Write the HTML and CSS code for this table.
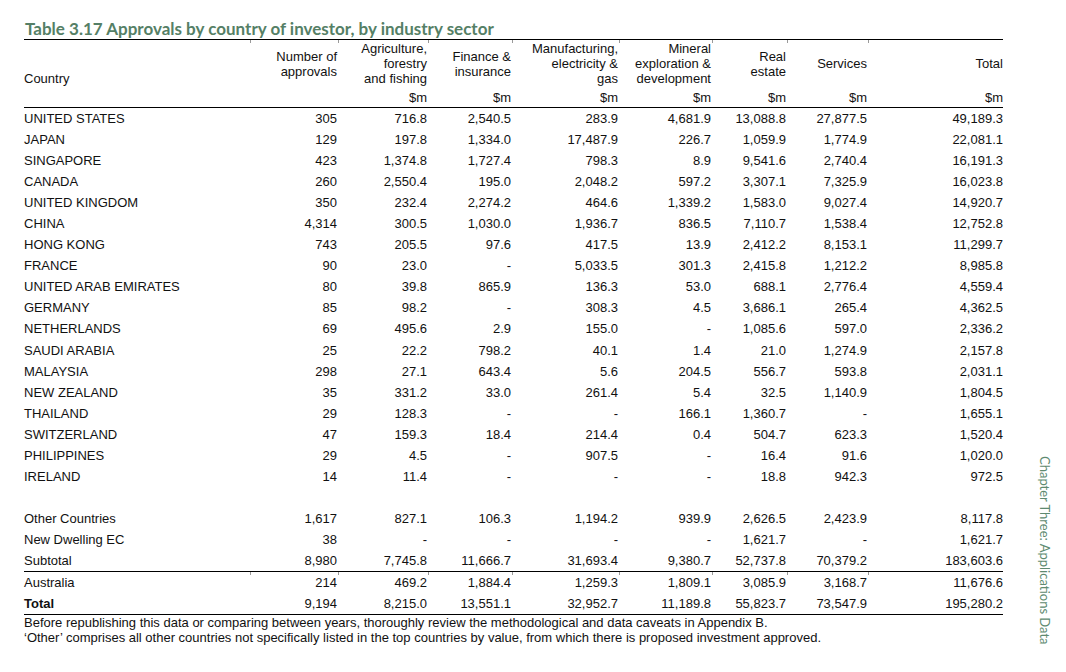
FILE: index.html
```html
<!DOCTYPE html>
<html lang="en">
<head>
<meta charset="utf-8">
<title>Table 3.17 Approvals by country of investor, by industry sector</title>
<link rel="stylesheet" href="styles.css">
</head>
<body>
<div class="page">
  <main class="main">
    <h1 class="title">Table 3.17 Approvals by country of investor, by industry sector</h1>
    <table class="data">
      <colgroup>
        <col class="c-country"><col class="c-num"><col class="c-agri"><col class="c-fin"><col class="c-man"><col class="c-min"><col class="c-real"><col class="c-serv"><col class="c-total">
      </colgroup>
      <thead>
        <tr class="head-names">
          <th class="country-head">Country</th>
          <th>Number of<br>approvals</th>
          <th>Agriculture,<br>forestry<br>and fishing</th>
          <th>Finance &amp;<br>insurance</th>
          <th>Manufacturing,<br>electricity &amp;<br>gas</th>
          <th>Mineral<br>exploration &amp;<br>development</th>
          <th>Real<br>estate</th>
          <th>Services</th>
          <th>Total</th>
        </tr>
        <tr class="head-units">
          <th></th><th></th><th>$m</th><th>$m</th><th>$m</th><th>$m</th><th>$m</th><th>$m</th><th>$m</th>
        </tr>
      </thead>
      <tbody>
        <tr><td>UNITED STATES</td><td>305</td><td>716.8</td><td>2,540.5</td><td>283.9</td><td>4,681.9</td><td>13,088.8</td><td>27,877.5</td><td>49,189.3</td></tr>
        <tr><td>JAPAN</td><td>129</td><td>197.8</td><td>1,334.0</td><td>17,487.9</td><td>226.7</td><td>1,059.9</td><td>1,774.9</td><td>22,081.1</td></tr>
        <tr><td>SINGAPORE</td><td>423</td><td>1,374.8</td><td>1,727.4</td><td>798.3</td><td>8.9</td><td>9,541.6</td><td>2,740.4</td><td>16,191.3</td></tr>
        <tr><td>CANADA</td><td>260</td><td>2,550.4</td><td>195.0</td><td>2,048.2</td><td>597.2</td><td>3,307.1</td><td>7,325.9</td><td>16,023.8</td></tr>
        <tr><td>UNITED KINGDOM</td><td>350</td><td>232.4</td><td>2,274.2</td><td>464.6</td><td>1,339.2</td><td>1,583.0</td><td>9,027.4</td><td>14,920.7</td></tr>
        <tr><td>CHINA</td><td>4,314</td><td>300.5</td><td>1,030.0</td><td>1,936.7</td><td>836.5</td><td>7,110.7</td><td>1,538.4</td><td>12,752.8</td></tr>
        <tr><td>HONG KONG</td><td>743</td><td>205.5</td><td>97.6</td><td>417.5</td><td>13.9</td><td>2,412.2</td><td>8,153.1</td><td>11,299.7</td></tr>
        <tr><td>FRANCE</td><td>90</td><td>23.0</td><td>-</td><td>5,033.5</td><td>301.3</td><td>2,415.8</td><td>1,212.2</td><td>8,985.8</td></tr>
        <tr><td>UNITED ARAB EMIRATES</td><td>80</td><td>39.8</td><td>865.9</td><td>136.3</td><td>53.0</td><td>688.1</td><td>2,776.4</td><td>4,559.4</td></tr>
        <tr><td>GERMANY</td><td>85</td><td>98.2</td><td>-</td><td>308.3</td><td>4.5</td><td>3,686.1</td><td>265.4</td><td>4,362.5</td></tr>
        <tr><td>NETHERLANDS</td><td>69</td><td>495.6</td><td>2.9</td><td>155.0</td><td>-</td><td>1,085.6</td><td>597.0</td><td>2,336.2</td></tr>
        <tr><td>SAUDI ARABIA</td><td>25</td><td>22.2</td><td>798.2</td><td>40.1</td><td>1.4</td><td>21.0</td><td>1,274.9</td><td>2,157.8</td></tr>
        <tr><td>MALAYSIA</td><td>298</td><td>27.1</td><td>643.4</td><td>5.6</td><td>204.5</td><td>556.7</td><td>593.8</td><td>2,031.1</td></tr>
        <tr><td>NEW ZEALAND</td><td>35</td><td>331.2</td><td>33.0</td><td>261.4</td><td>5.4</td><td>32.5</td><td>1,140.9</td><td>1,804.5</td></tr>
        <tr><td>THAILAND</td><td>29</td><td>128.3</td><td>-</td><td>-</td><td>166.1</td><td>1,360.7</td><td>-</td><td>1,655.1</td></tr>
        <tr><td>SWITZERLAND</td><td>47</td><td>159.3</td><td>18.4</td><td>214.4</td><td>0.4</td><td>504.7</td><td>623.3</td><td>1,520.4</td></tr>
        <tr><td>PHILIPPINES</td><td>29</td><td>4.5</td><td>-</td><td>907.5</td><td>-</td><td>16.4</td><td>91.6</td><td>1,020.0</td></tr>
        <tr><td>IRELAND</td><td>14</td><td>11.4</td><td>-</td><td>-</td><td>-</td><td>18.8</td><td>942.3</td><td>972.5</td></tr>
        <tr class="blank"><td></td><td></td><td></td><td></td><td></td><td></td><td></td><td></td><td></td></tr>
        <tr><td>Other Countries</td><td>1,617</td><td>827.1</td><td>106.3</td><td>1,194.2</td><td>939.9</td><td>2,626.5</td><td>2,423.9</td><td>8,117.8</td></tr>
        <tr><td>New Dwelling EC</td><td>38</td><td>-</td><td>-</td><td>-</td><td>-</td><td>1,621.7</td><td>-</td><td>1,621.7</td></tr>
        <tr class="subtotal"><td>Subtotal</td><td>8,980</td><td>7,745.8</td><td>11,666.7</td><td>31,693.4</td><td>9,380.7</td><td>52,737.8</td><td>70,379.2</td><td>183,603.6</td></tr>
        <tr class="after-rule"><td>Australia</td><td>214</td><td>469.2</td><td>1,884.4</td><td>1,259.3</td><td>1,809.1</td><td>3,085.9</td><td>3,168.7</td><td>11,676.6</td></tr>
        <tr class="total"><td class="total-label">Total</td><td>9,194</td><td>8,215.0</td><td>13,551.1</td><td>32,952.7</td><td>11,189.8</td><td>55,823.7</td><td>73,547.9</td><td>195,280.2</td></tr>
      </tbody>
    </table>
    <p class="note">Before republishing this data or comparing between years, thoroughly review the methodological and data caveats in Appendix B.<br>‘Other’ comprises all other countries not specifically listed in the top countries by value, from which there is proposed investment approved.</p>
  </main>
  <aside class="side">Chapter Three: Applications Data</aside>
</div>
</body>
</html>
```

FILE: styles.css
```css
html, body {
  margin: 0;
  padding: 0;
  background: #ffffff;
}

.page {
  display: flex;
  min-height: 672px;
  box-sizing: border-box;
  padding-left: 24px;
}

.main {
  width: 979px;
  flex: none;
}

.title {
  margin: 19px 0 0 1px;
  font-family: Lato, "Open Sans", sans-serif;
  font-weight: 700;
  font-size: 17px;
  line-height: 20px;
  color: #557f66;
  white-space: nowrap;
}

.data {
  width: 979px;
  table-layout: fixed;
  border-collapse: collapse;
  font-family: "Liberation Sans", Arial, sans-serif;
  font-size: 13px;
  color: #111111;
  border-top: 1px solid #000000;
}

.c-country { width: 227px; }
.c-num { width: 88px; }
.c-agri { width: 90px; }
.c-fin { width: 84px; }
.c-man { width: 107px; }
.c-min { width: 93px; }
.c-real { width: 75px; }
.c-serv { width: 81px; }
.c-total { width: 134px; }

.data th,
.data td {
  padding: 0 2px 0 0;
  text-align: right;
  font-weight: 400;
  white-space: nowrap;
}

.data th:last-child,
.data td:last-child {
  padding-right: 0;
}

.data th:first-child,
.data td:first-child {
  text-align: left;
}

.head-names th {
  height: 46px;
  line-height: 15px;
  vertical-align: middle;
  background: linear-gradient(#9a9a9a, #9a9a9a) right top / 1px 3px no-repeat;
}

.head-names th:last-child {
  background: none;
}

.head-names .country-head {
  vertical-align: bottom;
  padding-bottom: 1px;
}

.head-units th {
  height: 20px;
  line-height: 15px;
  vertical-align: middle;
  border-bottom: 1px solid #000000;
}

.data tbody td {
  height: 21.05px;
  line-height: 15px;
  vertical-align: middle;
}

.subtotal td {
  border-bottom: 1px solid #000000;
}

.after-rule td {
  background: linear-gradient(#9a9a9a, #9a9a9a) right top / 1px 3px no-repeat;
}

.after-rule td:last-child {
  background: none;
}

.total td {
  border-bottom: 1px solid #000000;
}

.data .total .total-label {
  font-weight: 700;
}

.note {
  margin: 0;
  font-family: "Liberation Sans", Arial, sans-serif;
  font-size: 13px;
  line-height: 15px;
  color: #111111;
  white-space: nowrap;
}

.side {
  align-self: flex-end;
  margin-left: 35px;
  margin-bottom: 27px;
  writing-mode: vertical-rl;
  font-family: Lato, "Open Sans", sans-serif;
  font-size: 13px;
  line-height: 14px;
  color: #5e8a70;
  white-space: nowrap;
}
```
